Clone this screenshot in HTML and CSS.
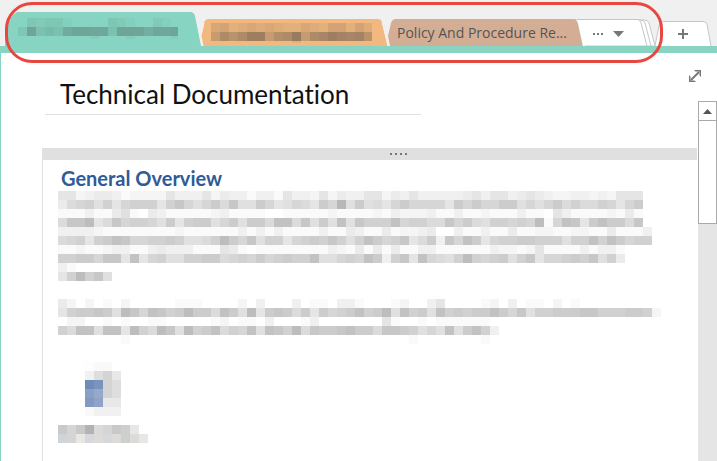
FILE: index.html
```html
<!DOCTYPE html>
<html lang="en">
<head>
    <meta charset="UTF-8">
    <meta name="viewport" content="width=device-width, initial-scale=1.0">
    <title>Technical Documentation</title>
    <link rel="stylesheet" href="styles.css">
</head>
<body>
    <header class="tab-bar">
        <nav class="tabs">
            <button class="tab tab-active" aria-label="Section 1">
                <svg class="tab-shape" viewBox="0 0 196 34" preserveAspectRatio="none">
                    <path d="M0 34V17Q3 5 12 0H185Q189 0 190 4L196 34Z" fill="#86d4c1"/>
                </svg>
                <svg class="mosaic" id="tabOne"></svg>
            </button>
            <button class="tab tab-orange" aria-label="Section 2">
                <svg class="tab-shape" viewBox="0 0 187 27" preserveAspectRatio="none">
                    <path d="M2 27L0 17L3 4Q4 0 8 0H177Q180 0 181 3L187 27Z" fill="#f1b87f"/>
                    <path d="M2 27L0 17L3 4M181 3L187 27" fill="none" stroke="#f8f0e8"/>
                </svg>
                <svg class="mosaic" id="tabTwo"></svg>
            </button>
            <button class="tab tab-tan">
                <svg class="tab-shape" viewBox="0 0 196 27" preserveAspectRatio="none">
                    <path d="M2 27L0 17L3 4Q4 0 8 0H186Q190 0 191 4L196 27Z" fill="#d4ae94"/>
                </svg>
                <span>Policy And Procedure Re...</span>
            </button>
            <button class="tab tab-more" aria-label="More sections">
                <svg class="tab-shape" viewBox="0 0 80 27">
                    <path d="M58 1H68Q72 1 73 4L79 27H58Z" fill="#fff" stroke="#c6c6c6"/>
                    <path d="M58 1H64Q68 1 69 4L75 27H58Z" fill="#fff" stroke="#c6c6c6"/>
                    <path d="M0 0.5H62Q64 0.5 65 4L71 27H7L2 4Q1 1 0 0.5Z" fill="#fff" stroke="#c6c6c6"/>
                    <path d="M0 0L2 4L7 27H9L3 3Q2 1 0 0Z" fill="#fff"/>
                    <path d="M17 14h2v2h-2zM21 14h2v2h-2zM25 14h2v2h-2z" fill="#777"/>
                    <path d="M37 12H48L42.500 18Z" fill="#777"/>
                </svg>
            </button>
            <div class="highlight"></div>
        </nav>
        <button class="tab tab-add" aria-label="Add section">
            <svg class="tab-shape" viewBox="0 0 57 25">
                <path d="M0 25L4 5Q5 0.500 9 0.500H48Q51 0.500 52 3L56 25" fill="#fff" stroke="#c6c6c6"/>
                <path d="M23 13H33M28 8V18" stroke="#777" stroke-width="2"/>
            </svg>
        </button>
    </header>

    <main class="page">
        <button class="expand" aria-label="Full page view">
            <svg width="14" height="14" viewBox="0 0 14 14">
                <path d="M3 11L11 3" stroke="#777" stroke-width="2"/>
                <path d="M6 1H13V8L11.500 6.500V2.500H7.500ZM1 6V13H8L6.500 11.500H2.500V7.500Z" fill="#777"/>
            </svg>
        </button>
        <div class="content">
            <h1>Technical Documentation</h1>
            <section class="note">
                <div class="note-handle"><i></i><i></i><i></i><i></i></div>
                <div class="note-body">
                    <h2>General Overview</h2>
                    <svg class="mosaic" id="textOne"></svg>
                    <svg class="mosaic" id="textTwo"></svg>
                    <div class="attachment">
                        <svg class="mosaic" id="fileIcon"></svg>
                        <svg class="mosaic" id="fileName"></svg>
                    </div>
                </div>
            </section>
        </div>
        <div class="scrollbar">
            <button class="scroll-up" aria-label="Scroll up">
                <svg width="9" height="5" viewBox="0 0 9 5"><path d="M0 5L4.500 0L9 5Z" fill="#555"/></svg>
            </button>
            <div class="scroll-thumb"></div>
        </div>
    </main>

    <script src="script.js"></script>
</body>
</html>
```
FILE: styles.css
```css
* {
    margin: 0;
    padding: 0;
    box-sizing: border-box;
}

body {
    display: flex;
    flex-direction: column;
    min-height: 100vh;
    background-color: #fff;
    font-family: Lato, sans-serif;
    font-variant-ligatures: none;
}

button {
    border: none;
    background: none;
    cursor: pointer;
}

svg {
    display: block;
}

.tab-bar {
    display: flex;
    align-items: flex-end;
    height: 53px;
    padding-left: 5px;
    background-color: #f0f0f0;
    border-bottom: 7px solid #86d4c1;
}

.tabs {
    position: relative;
    display: flex;
    align-items: flex-end;
}

.tab {
    position: relative;
    flex: none;
    height: 27px;
    text-align: left;
}

.tab-shape {
    position: absolute;
    inset: 0;
    width: 100%;
    height: 100%;
}

.tab .mosaic,
.tab span {
    position: relative;
}

.tab-active {
    width: 196px;
    height: 34px;
    padding: 0 0 1px 13px;
}

.tab-orange {
    width: 187px;
    padding: 1px 0 0 10px;
}

.tab-tan {
    width: 196px;
    padding-left: 9px;
    color: #555;
    font-family: "Open Sans", sans-serif;
    font-size: 14px;
    white-space: nowrap;
}

.tab-more {
    width: 80px;
    margin-left: -8px;
}

.tab-add {
    width: 57px;
    height: 25px;
    margin-left: -1px;
}

.highlight {
    position: absolute;
    top: -10px;
    left: 0;
    right: -7px;
    height: 61px;
    border: 3px solid #e8473f;
    border-radius: 27px;
    z-index: 2;
    pointer-events: none;
}

.page {
    position: relative;
    display: flex;
    flex: 1;
    border-left: 1px solid #86d4c1;
}

.expand {
    position: absolute;
    top: 16px;
    right: 15px;
}

.content {
    display: flex;
    flex: 1;
    flex-direction: column;
    padding: 26px 1px 0 41px;
}

h1 {
    width: 376px;
    margin: 0 0 33px 3px;
    padding: 0 0 4px 15px;
    border-bottom: 1px solid #e0e0e0;
    color: #111;
    font-size: 26px;
    font-weight: 400;
    line-height: 31px;
    white-space: nowrap;
}

.note {
    flex: 1;
    border-left: 1px solid #e0e0e0;
}

.note-handle {
    display: flex;
    align-items: center;
    justify-content: center;
    gap: 3px;
    height: 12px;
    padding-left: 56px;
    background-color: #e0e0e0;
}

.note-handle i {
    width: 2px;
    height: 2px;
    background-color: #777;
}

.note-body {
    padding: 6px 0 0 15px;
}

h2 {
    margin-bottom: 1px;
    padding-left: 3px;
    color: #2f5b96;
    font-size: 20px;
    font-weight: 700;
    line-height: 24px;
}

#textOne,
#textTwo {
    margin-bottom: 18px;
}

#fileIcon {
    margin: 0 0 9px 27px;
}

.scrollbar {
    width: 19px;
    margin-top: 48px;
    background-color: #e5e5e5;
}

.scroll-up {
    display: flex;
    align-items: center;
    justify-content: center;
    width: 100%;
    height: 20px;
    background-color: #fff;
    border: 1px solid #aaa;
}

.scroll-thumb {
    height: 103px;
    background-color: #fff;
    border: 1px solid #aaa;
    border-top: none;
}
```
FILE: script.js
```js
const CELL = 9;
const SVG_NS = 'http://www.w3.org/2000/svg';

function drawMosaic(id, rows, fillFor, width, height) {
    const svg = document.getElementById(id);
    const columns = Math.max(...rows.map(row => row.length));
    svg.setAttribute('width', width || columns * CELL);
    svg.setAttribute('height', height || rows.length * CELL);
    svg.setAttribute('shape-rendering', 'crispEdges');

    rows.forEach((row, y) => {
        [...row].forEach((value, x) => {
            const rect = document.createElementNS(SVG_NS, 'rect');
            rect.setAttribute('x', x * CELL);
            rect.setAttribute('y', y * CELL);
            rect.setAttribute('width', CELL);
            rect.setAttribute('height', CELL);
            rect.setAttribute('fill', fillFor(value));
            svg.appendChild(rect);
        });
    });
}

// each hex digit is a shade, 0 is clear and f is the darkest
function shade(r, g, b, step) {
    return value => `rgba(${r}, ${g}, ${b}, ${parseInt(value, 16) * step})`;
}

drawMosaic('tabOne', [
    '043441000043100310',
    '4f686dffee6fffceef',
    '000000002000200002'
], shade(55, 55, 55, 0.02), 160, 21);

drawMosaic('tabTwo', [
    '452343432243255253',
    '7b9bee7abf7bcedcd9',
    '000000000200000000'
], shade(40, 48, 56, 0.03), 161, 20);

drawMosaic('textOne', [
    '55234431222253335243313315332524335524353333345355345432233232555',
    '4789695899959b868a7b66a856875a8e6a6758a88885a8a88aa6868a79779858a',
    '11131146104311111231111001111121111213222311311211131105311112141',
    '7bbd57b89986a59aa68a6aa7cc7b6a6c6b999c89977b8a7699898d18cb5acaa7b',
    '333321111111121111113131311113114311412234003113114112211221141113',
    '78959acb8899a96679da8b699589a9b969ca89b57a3b8ca5899aa999699c9ca899',
    '112112331134333111541011111111321414141133111111322125111131331',
    '99aa8bb5c5896699aa7898a89a99c66898ca39b5c8769d989a69b5889a9b694',
    '31',
    '59d9b6'
], shade(0, 0, 0, 0.02));

drawMosaic('textTwo', [
    '4202010200000111000020300030110331000120035000012030110201',
    '59aaba6db8cb9adaa7ca6d5aba7a5a89ac9ad6c9a6c9a9aaca8b699aaabb999aa92',
    '022001010011000001201103000130000000510010111111',
    '97cc6cc5d97db6d9ac798c6cb9d7baabcaa7bba9686c6ac93',
    '0000000100000000000000000000000000000001000000010'
], shade(0, 0, 0, 0.02));

const iconColors = {
    a: '#fdfdfd', b: '#f9f9f9', c: '#f1f1f1', d: '#dedede', e: '#d4d4d4', f: '#e8e8e8',
    1: '#6f8cb9', 2: '#7a93bd', 3: '#88a0c8', 4: '#97a9ca', 5: '#8399c1', 6: '#8fa3c8',
    0: '#fff'
};

drawMosaic('fileIcon', [
    'abb0',
    'cdef',
    '12ed',
    '34ed',
    '56ff',
    'bccc'
], value => iconColors[value]);

const nameColors = {
    a: '#c9c9c9', b: '#d5d5d5', c: '#b3b1b6', d: '#dadada', e: '#cdcfcb', f: '#e8e7e5',
    g: '#ced5d8', h: '#d5d9dc', i: '#cbd2cb', j: '#dcdbd9', 0: '#fff'
};

drawMosaic('fileName', [
    'abacdbaef0',
    'gbfhjhjijf'
], value => nameColors[value]);
```
